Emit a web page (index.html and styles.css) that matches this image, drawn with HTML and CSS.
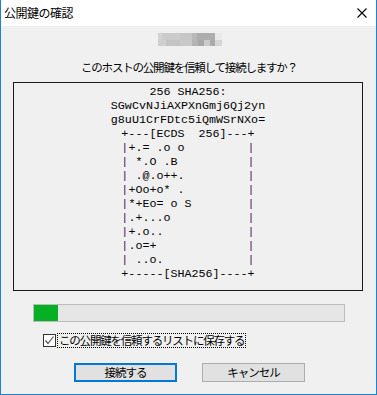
FILE: index.html
```html
<!DOCTYPE html>
<html lang="ja">
<head>
<meta charset="utf-8">
<title>公開鍵の確認</title>
<link rel="stylesheet" href="styles.css">
</head>
<body>
<div class="window">
  <div class="titlebar">
    <span class="title">公開鍵の確認</span>
    <svg class="close" width="10" height="10" viewBox="0 0 10 10">
      <path d="M0.5 0.5 L9.5 9.5 M9.5 0.5 L0.5 9.5" stroke="#000" stroke-width="1.1" fill="none"/>
    </svg>
  </div>
  <div class="content">
    <svg class="host" width="64" height="13" viewBox="0 0 64 13">
      <rect x="0" y="0" width="4" height="7" fill="#d3d3d3"/>
      <rect x="4" y="0" width="18" height="7" fill="#cbcbcb"/>
      <rect x="22" y="0" width="12" height="7" fill="#c6c6c6"/>
      <rect x="34" y="0" width="5" height="7" fill="#b8b8b8"/>
      <rect x="39" y="0" width="18" height="7" fill="#adadad"/>
      <rect x="57" y="0" width="7" height="7" fill="#e9e9e9"/>
      <rect x="0" y="7" width="8" height="6" fill="#cfcfcf"/>
      <rect x="8" y="7" width="14" height="6" fill="#c4c4c4"/>
      <rect x="22" y="7" width="12" height="6" fill="#c9c9c9"/>
      <rect x="34" y="7" width="6" height="6" fill="#b3b3b3"/>
      <rect x="40" y="7" width="6" height="6" fill="#a7a7a7"/>
      <rect x="46" y="7" width="6" height="6" fill="#cacaca"/>
      <rect x="52" y="7" width="5" height="6" fill="#aaaaaa"/>
      <rect x="57" y="7" width="7" height="6" fill="#d6d6d6"/>
    </svg>
    <p class="question">このホストの公開鍵を信頼して接続しますか？</p>
    <pre class="fingerprint">256 SHA256:
SGwCvNJiAXPXnGmj6Qj2yn
g8uU1CrFDtc5iQmWSrNXo=
+---[ECDS  256]---+
<span class="bar">|</span>+.= .o o         <span class="bar">|</span>
<span class="bar">|</span> *.O .B          <span class="bar">|</span>
<span class="bar">|</span> .@.o++.         <span class="bar">|</span>
<span class="bar">|</span>+Oo+o* .         <span class="bar">|</span>
<span class="bar">|</span>*+Eo= o S        <span class="bar">|</span>
<span class="bar">|</span>.+...o           <span class="bar">|</span>
<span class="bar">|</span>+.o..            <span class="bar">|</span>
<span class="bar">|</span>.o=+             <span class="bar">|</span>
<span class="bar">|</span> ..o.            <span class="bar">|</span>
+-----[SHA256]----+</pre>
    <div class="progress"><div class="progress-fill" style="width: 24px"></div></div>
    <label class="check-row">
      <span class="checkbox">
        <svg width="11" height="11" viewBox="0 0 11 11">
          <path d="M1.5 5.5 L4 8.5 L9.5 1.5" stroke="#555" stroke-width="1.2" fill="none"/>
        </svg>
      </span>
      <span class="check-label">この公開鍵を信頼するリストに保存する</span>
    </label>
    <div class="buttons">
      <button class="btn btn-default" type="button">接続する</button>
      <button class="btn" type="button">キャンセル</button>
    </div>
  </div>
</div>
</body>
</html>
```
FILE: styles.css
```css
html, body {
  margin: 0;
  padding: 0;
  background: #f0f0f0;
}

body {
  font-family: "Noto Sans CJK JP", "Noto Sans", sans-serif;
  color: #000;
}

.window {
  width: 377px;
  height: 395px;
  box-sizing: border-box;
  border-left: 1px solid #1883d7;
  border-right: 1px solid #1883d7;
  border-bottom: 1px solid #1883d7;
  background: #f0f0f0;
  display: flex;
  flex-direction: column;
}

.titlebar {
  height: 26px;
  background: #fff;
  display: flex;
  align-items: center;
  padding: 0 9px 0 3px;
}
.title {
  font-size: 12px;
  letter-spacing: -0.5px;
  line-height: 16px;
  flex: 1;
  margin-top: -1px;
}
.close {
  display: block;
}

.content {
  display: flex;
  flex-direction: column;
  padding: 0 13px 0 12px;
}

.host {
  display: block;
  margin: 7px 0 0 145px;
}

.question {
  margin: 13px 0 0 0;
  font-size: 11.5px;
  letter-spacing: -1.2px;
  line-height: 16px;
  text-align: center;
  padding-left: 2px;
}

.fingerprint {
  margin: 7px 0 0 0;
  height: 209px;
  box-sizing: border-box;
  border: 1px solid #1a1a1a;
  padding: 2px 0 0 0;
  font-family: "Liberation Mono", "DejaVu Sans Mono", monospace;
  font-size: 11.7px;
  line-height: 14px;
  text-align: center;
  white-space: pre;
  color: #000;
}
.bar {
  color: #4a1258;
}

.progress {
  margin: 13px 0 0 20px;
  width: 312px;
  height: 18px;
  box-sizing: border-box;
  border: 1px solid #bcbcbc;
  background: #e6e6e6;
}
.progress-fill {
  height: 100%;
  background: #06b025;
}

.check-row {
  display: flex;
  align-items: center;
  margin: 10px 0 0 30px;
  height: 16px;
}
.checkbox {
  width: 13px;
  height: 13px;
  box-sizing: border-box;
  border: 1px solid #333;
  background: #fff;
  display: flex;
  align-items: center;
  justify-content: center;
}
.checkbox svg {
  display: block;
}
.check-label {
  margin-left: 1px;
  border: 1px dotted #000;
  padding: 0 1px;
  font-size: 11.5px;
  letter-spacing: -1.2px;
  line-height: 13px;
}

.buttons {
  display: flex;
  gap: 25px;
  margin: 15px 0 0 61px;
}
.btn {
  width: 103px;
  height: 19px;
  box-sizing: border-box;
  border: 1px solid #adadad;
  background: #e1e1e1;
  font-family: "Noto Sans CJK JP", "Noto Sans", sans-serif;
  font-size: 11.5px;
  letter-spacing: -1px;
  line-height: 15px;
  padding: 0;
  color: #000;
}
.btn-default {
  border: 2px solid #0078d7;
}
```
